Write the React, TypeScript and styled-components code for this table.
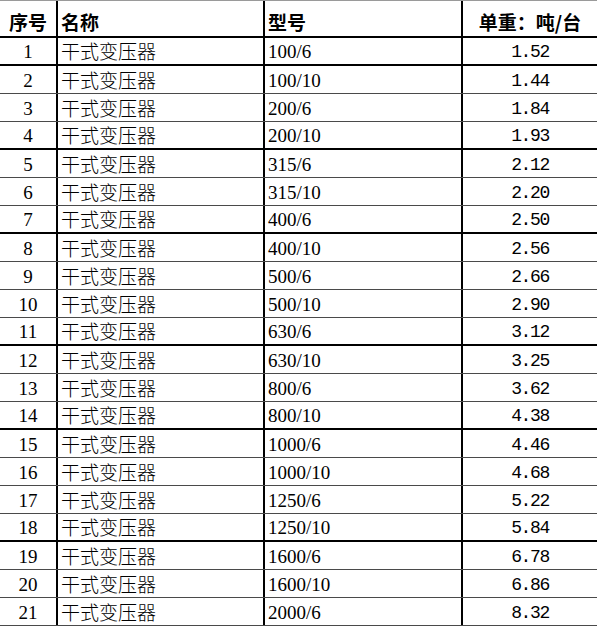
import React from 'react';
import styled, { createGlobalStyle } from 'styled-components';

const GlobalStyle = createGlobalStyle`
  html, body {
    margin: 0;
    padding: 0;
    background: #fff;
    overflow: hidden;
  }
`;

const Sheet = styled.div`
  width: 597px;
  height: 626px;
  overflow: hidden;
  background: #fff;
  color: #000;
  font-family: "Liberation Serif", "Noto Sans CJK SC", serif;
`;

const HeaderRow = styled.div`
  display: grid;
  grid-template-columns: 58px 207px 198px 1fr;
  height: 38px;
  box-sizing: border-box;
  border-top: 1px solid #9a9a9a;
  border-bottom: 2px solid #000;
`;

const Row = styled.div<{ $thick?: boolean }>`
  display: grid;
  grid-template-columns: 58px 207px 198px 1fr;
  height: 28px;
  box-sizing: border-box;
  border-bottom: ${(p) => (p.$thick ? '2px solid #000' : '1px solid #4a4a4a')};
`;

const Cell = styled.div<{ $align?: 'left' | 'center'; $last?: boolean }>`
  display: flex;
  align-items: flex-end;
  justify-content: ${(p) => (p.$align === 'center' ? 'center' : 'flex-start')};
  padding: 0 0 1px ${(p) => (p.$align === 'center' ? '0' : '3px')};
  box-sizing: border-box;
  border-right: ${(p) => (p.$last ? 'none' : '2px solid #000')};
  font-size: 19px;
  line-height: 22px;
  white-space: nowrap;
  overflow: hidden;
`;

const HeadText = styled.span`
  font-family: "Noto Sans CJK SC", sans-serif;
  font-weight: 700;
  font-size: 19px;
  line-height: 24px;
  padding-bottom: 1px;
`;

const NameText = styled.span`
  font-family: "Noto Sans CJK SC", sans-serif;
  font-weight: 300;
  font-size: 19px;
  line-height: 24px;
`;

const WeightText = styled.span`
  font-family: "Liberation Mono", monospace;
  font-size: 18px;
  letter-spacing: -1.4px;
`;

const rows: [string, string][] = [
  ['100/6', '1.52'],
  ['100/10', '1.44'],
  ['200/6', '1.84'],
  ['200/10', '1.93'],
  ['315/6', '2.12'],
  ['315/10', '2.20'],
  ['400/6', '2.50'],
  ['400/10', '2.56'],
  ['500/6', '2.66'],
  ['500/10', '2.90'],
  ['630/6', '3.12'],
  ['630/10', '3.25'],
  ['800/6', '3.62'],
  ['800/10', '4.38'],
  ['1000/6', '4.46'],
  ['1000/10', '4.68'],
  ['1250/6', '5.22'],
  ['1250/10', '5.84'],
  ['1600/6', '6.78'],
  ['1600/10', '6.86'],
  ['2000/6', '8.32'],
];

const thickAfter = [1, 4, 7, 11, 14, 18];

const App: React.FC = () => (
  <>
    <GlobalStyle />
    <Sheet>
      <HeaderRow>
        <Cell $align="center"><HeadText>序号</HeadText></Cell>
        <Cell><HeadText>名称</HeadText></Cell>
        <Cell><HeadText>型号</HeadText></Cell>
        <Cell $align="center" $last><HeadText>单重：吨/台</HeadText></Cell>
      </HeaderRow>
      {rows.map(([model, weight], i) => (
        <Row key={model} $thick={thickAfter.includes(i + 1)}>
          <Cell $align="center">{i + 1}</Cell>
          <Cell><NameText>干式变压器</NameText></Cell>
          <Cell>{model}</Cell>
          <Cell $align="center" $last><WeightText>{weight}</WeightText></Cell>
        </Row>
      ))}
    </Sheet>
  </>
);

export default App;
